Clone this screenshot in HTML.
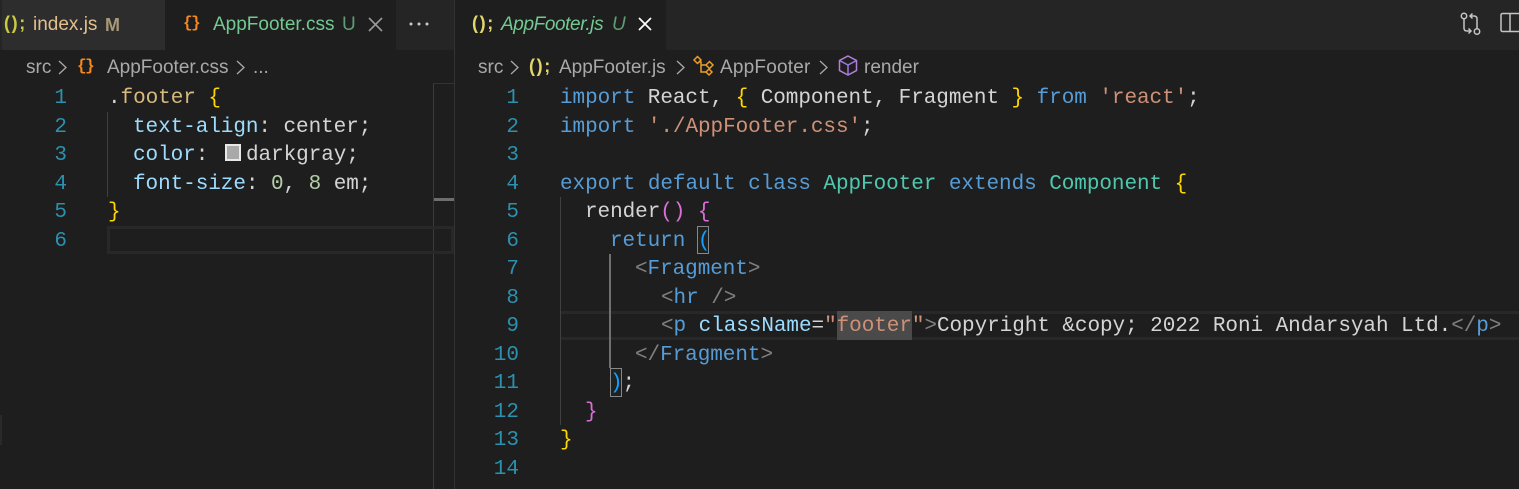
<!DOCTYPE html>
<html><head><meta charset="utf-8">
<style>
html,body{margin:0;padding:0;background:#1e1e1e}
#r{position:relative;width:1519px;height:489px;overflow:hidden;background:#1e1e1e}
.a{position:absolute}
.u{font-family:"Liberation Sans",sans-serif;font-size:19px;white-space:pre;line-height:24px}
.i{font-family:"Liberation Sans",sans-serif;font-size:18px;font-weight:bold;letter-spacing:1.6px;line-height:24px;white-space:pre;position:absolute}
.c{position:absolute;font-family:"Liberation Mono",monospace;font-size:21px;letter-spacing:-.06px;line-height:28px;white-space:pre;color:#d4d4d4}
.n{position:absolute;font-family:"Liberation Mono",monospace;font-size:21px;line-height:28px;color:#2b91af;text-align:right;width:40px}
.k{color:#569cd6}.p{color:#9cdcfe}.y{color:#ffd700}.m{color:#da70d6}.b{color:#179fff}.g{color:#808080}.s{color:#ce9178}.t{color:#4ec9b0}.f{color:#b5cea8}.w{color:#d7ba7d}
svg{position:absolute;overflow:visible}
</style></head><body><div id="r">
<!-- tab bars -->
<div class="a" style="left:0;top:0;width:454px;height:50px;background:#252526"></div>
<div class="a" style="left:455px;top:0;width:1064px;height:50px;background:#252526"></div>
<div class="a" style="left:2px;top:0;width:163px;height:50px;background:#2d2d2d"></div>
<div class="a" style="left:165px;top:0;width:231px;height:50px;background:#1e1e1e"></div>
<div class="a" style="left:455px;top:0;width:211px;height:50px;background:#1e1e1e"></div>
<div class="a" style="left:454px;top:0;width:1px;height:489px;background:#333"></div>
<div class="a" style="left:0;top:415px;width:2px;height:30px;background:#2a2a2a"></div>

<!-- left tabs -->
<div class="i" style="left:4px;top:11px;color:#cbcb41">();</div>
<div class="a u" style="left:33px;top:13px;color:#e2c08d">index.js</div>
<div class="a u" style="left:105px;top:13px;color:#a89878;font-weight:bold;font-size:18px">M</div>
<div class="a u" style="left:183px;top:11px;color:#f6881e;font-weight:bold;font-size:16px;font-family:'Liberation Mono',monospace;letter-spacing:-1.500px">{}</div>
<div class="a u" style="left:213px;top:13px;color:#73c991">AppFooter.css</div>
<div class="a u" style="left:342px;top:13px;color:#5f9e72">U</div>
<svg style="left:368px;top:16px" width="15" height="16"><path d="M1 2L14 15M14 2L1 15" stroke="#9a9a9a" stroke-width="1.6" fill="none"/></svg>
<svg style="left:409px;top:21px" width="20" height="6"><circle cx="2" cy="3" r="1.5" fill="#ccc"/><circle cx="10" cy="3" r="1.5" fill="#ccc"/><circle cx="18" cy="3" r="1.5" fill="#ccc"/></svg>

<!-- right tab -->
<div class="i" style="left:472px;top:11px;color:#e3d76a">();</div>
<div class="a u" style="left:501px;top:13px;color:#73c991;font-style:italic;letter-spacing:-.4px">AppFooter.js</div>
<div class="a u" style="left:612px;top:13px;color:#5f9e72;font-style:italic">U</div>
<svg style="left:638px;top:17px" width="15" height="15"><path d="M1 1L13 13M13 1L1 13" stroke="#fff" stroke-width="1.7" fill="none"/></svg>

<!-- toolbar icons -->
<svg style="left:1459px;top:12px" width="24" height="24" fill="none" stroke="#c5c5c5" stroke-width="1.5"><circle cx="5" cy="4" r="2.700"/><circle cx="18" cy="19.500" r="2.700"/><path d="M5 6.700V16Q5 19 8 19H12M9.500 16.500L12 19L9.500 21.500"/><path d="M18 16.800V7Q18 4 15 4H11M13.500 1.500L11 4L13.500 6.500"/></svg>
<svg style="left:1500px;top:12px" width="24" height="21" fill="none" stroke="#c5c5c5" stroke-width="1.5"><rect x="1" y="1.500" width="30" height="18" rx="1.500"/><path d="M10 1.500V19.500"/></svg>

<!-- breadcrumbs left -->
<div class="a u" style="left:26px;top:56px;color:#a9a9a9">src</div>
<svg style="left:58px;top:60px" width="10" height="15"><path d="M1 1L8 7.500L1 14" stroke="#a9a9a9" stroke-width="1.3" fill="none"/></svg>
<div class="a u" style="left:77px;top:54px;color:#f6881e;font-weight:bold;font-size:16px;font-family:'Liberation Mono',monospace;letter-spacing:-1.500px">{}</div>
<div class="a u" style="left:107px;top:56px;color:#a9a9a9">AppFooter.css</div>
<svg style="left:236px;top:60px" width="10" height="15"><path d="M1 1L8 7.500L1 14" stroke="#a9a9a9" stroke-width="1.3" fill="none"/></svg>
<div class="a u" style="left:253px;top:56px;color:#a9a9a9">...</div>

<!-- breadcrumbs right -->
<div class="a u" style="left:478px;top:56px;color:#a9a9a9">src</div>
<svg style="left:510px;top:60px" width="10" height="15"><path d="M1 1L8 7.500L1 14" stroke="#a9a9a9" stroke-width="1.3" fill="none"/></svg>
<div class="i" style="left:529px;top:54px;color:#e3d76a">();</div>
<div class="a u" style="left:559px;top:56px;color:#a9a9a9">AppFooter.js</div>
<svg style="left:676px;top:60px" width="10" height="15"><path d="M1 1L8 7.500L1 14" stroke="#a9a9a9" stroke-width="1.3" fill="none"/></svg>
<svg style="left:693px;top:55px" width="21" height="21" fill="none" stroke="#ee9d28" stroke-width="1.5"><path d="M1 5L4.500 1.500L8 5L4.500 8.500Z"/><path d="M13 10L16.500 6.500L20 10L16.500 13.500Z"/><path d="M13 17L16 14L19 17L16 20L13 17Z"/><path d="M6.500 7H8V10H13M8 10V17H13"/></svg>
<div class="a u" style="left:720px;top:56px;color:#a9a9a9;letter-spacing:.2px">AppFooter</div>
<svg style="left:819px;top:60px" width="10" height="15"><path d="M1 1L8 7.500L1 14" stroke="#a9a9a9" stroke-width="1.3" fill="none"/></svg>
<svg style="left:838px;top:55px" width="20" height="21" fill="none" stroke="#b180d7" stroke-width="1.5"><path d="M10 1L18.500 5.500V15.500L10 20L1.500 15.500V5.500Z"/><path d="M1.500 5.500L10 10L18.500 5.500M10 10V20" stroke="#9a7ae0"/></svg>
<div class="a u" style="left:864px;top:56px;color:#a9a9a9">render</div>

<!-- left pane decorations -->
<div class="a" style="left:433px;top:84px;width:1px;height:405px;background:#3c3c3c"></div>
<div class="a" style="left:433px;top:83px;width:21px;height:1px;background:#333"></div>
<div class="a" style="left:434px;top:198px;width:20px;height:3px;background:#6e6e6e"></div>
<div class="a" style="left:107px;top:226px;width:347px;height:28px;box-sizing:border-box;border:3px solid #282828"></div>
<div class="a" style="left:107px;top:112px;width:1px;height:85px;background:#404040"></div>

<!-- left gutter -->
<div class="n" style="left:27px;top:85px">1</div>
<div class="n" style="left:27px;top:114px">2</div>
<div class="n" style="left:27px;top:142px">3</div>
<div class="n" style="left:27px;top:171px">4</div>
<div class="n" style="left:27px;top:199px">5</div>
<div class="n" style="left:27px;top:228px">6</div>

<!-- left code -->
<div class="c" style="left:108px;top:85px"><span>.</span><span class="w">footer</span> <span class="y">{</span></div>
<div class="c" style="left:133px;top:114px"><span class="p">text-align</span>: center;</div>
<div class="c" style="left:133px;top:142px"><span class="p">color</span>:</div>
<div class="a" style="left:225px;top:144px;width:16px;height:17px;box-sizing:border-box;border:2px solid #e8e8e8;background:#a9a9a9"></div>
<div class="c" style="left:246px;top:142px">darkgray;</div>
<div class="c" style="left:133px;top:171px"><span class="p">font-size</span>: <span class="f">0</span>, <span class="f">8</span> em;</div>
<div class="c" style="left:108px;top:199px"><span class="y">}</span></div>

<!-- right pane decorations -->
<div class="a" style="left:561px;top:311px;width:958px;height:29px;box-sizing:border-box;border-top:3px solid #282828;border-bottom:3px solid #282828"></div>
<div class="a" style="left:560px;top:197px;width:1px;height:228px;background:#404040"></div>
<div class="a" style="left:609px;top:254px;width:2px;height:114px;background:#707070"></div>
<div class="a" style="left:837px;top:311px;width:75px;height:29px;background:#4a4a4a"></div>
<div class="a" style="left:697px;top:226px;width:12px;height:28px;box-sizing:border-box;border:1px solid #888;background:#1e2322"></div>
<div class="a" style="left:610px;top:368px;width:12px;height:29px;box-sizing:border-box;border:1px solid #888;background:#1e2322"></div>

<!-- right gutter -->
<div class="n" style="left:479px;top:85px">1</div>
<div class="n" style="left:479px;top:114px">2</div>
<div class="n" style="left:479px;top:142px">3</div>
<div class="n" style="left:479px;top:171px">4</div>
<div class="n" style="left:479px;top:199px">5</div>
<div class="n" style="left:479px;top:228px">6</div>
<div class="n" style="left:479px;top:256px">7</div>
<div class="n" style="left:479px;top:285px">8</div>
<div class="n" style="left:479px;top:313px">9</div>
<div class="n" style="left:479px;top:342px">10</div>
<div class="n" style="left:479px;top:370px">11</div>
<div class="n" style="left:479px;top:399px">12</div>
<div class="n" style="left:479px;top:427px">13</div>
<div class="n" style="left:479px;top:456px">14</div>

<!-- right code -->
<div class="c" style="left:560px;top:85px"><span class="k">import</span> React, <span class="y">{</span> Component, Fragment <span class="y">}</span> <span class="k">from</span> <span class="s">'react'</span>;</div>
<div class="c" style="left:560px;top:114px"><span class="k">import</span> <span class="s">'./AppFooter.css'</span>;</div>
<div class="c" style="left:560px;top:171px"><span class="k">export</span> <span class="k">default</span> <span class="k">class</span> <span class="t">AppFooter</span> <span class="k">extends</span> <span class="t">Component</span> <span class="y">{</span></div>
<div class="c" style="left:585px;top:199px">render<span class="m">()</span> <span class="m">{</span></div>
<div class="c" style="left:610px;top:228px"><span class="k">return</span> <span class="b">(</span></div>
<div class="c" style="left:635px;top:256px"><span class="g">&lt;</span><span class="k">Fragment</span><span class="g">&gt;</span></div>
<div class="c" style="left:661px;top:285px"><span class="g">&lt;</span><span class="k">hr</span> <span class="g">/&gt;</span></div>
<div class="c" style="left:661px;top:313px"><span class="g">&lt;</span><span class="k">p</span> <span class="p">className</span>=<span class="s">"footer"</span><span class="g">&gt;</span>Copyright &amp;copy; 2022 Roni Andarsyah Ltd.<span class="g">&lt;/</span><span class="k">p</span><span class="g">&gt;</span></div>
<div class="c" style="left:635px;top:342px"><span class="g">&lt;/</span><span class="k">Fragment</span><span class="g">&gt;</span></div>
<div class="c" style="left:610px;top:370px"><span class="b">)</span>;</div>
<div class="c" style="left:585px;top:399px"><span class="m">}</span></div>
<div class="c" style="left:560px;top:427px"><span class="y">}</span></div>
</div></body></html>
